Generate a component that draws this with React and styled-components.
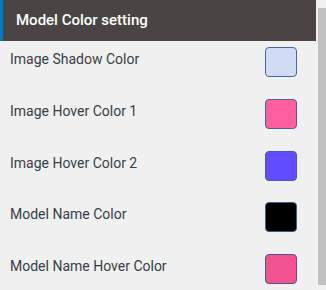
import React from "react";
import styled, { createGlobalStyle } from "styled-components";

const Global = createGlobalStyle`
  html, body { margin: 0; padding: 0; background: #f0f0f1; }
  body { font-family: Roboto, "Noto Sans", "Liberation Sans", sans-serif; }
`;

const Frame = styled.div`
  width: 326px;
  height: 290px;
  display: flex;
  overflow: hidden;
  background: #f0f0f1;
`;

const Panel = styled.div`
  width: 316px;
  display: flex;
  flex-direction: column;
`;

const Header = styled.div`
  flex-shrink: 0;
  height: 41px;
  box-sizing: border-box;
  background: #4a4544;
  border-left: 3px solid #0a78b8;
  color: #ffffff;
  font-size: 15px;
  font-weight: 500;
  display: flex;
  align-items: center;
  padding-left: 13px;
  padding-bottom: 2px;
`;

const List = styled.div`
  flex-shrink: 0;
  display: flex;
  flex-direction: column;
`;

const Row = styled.div`
  display: flex;
  justify-content: space-between;
  align-items: flex-start;
  padding: 6px 19px 15.75px 10px;
`;

const Label = styled.span`
  margin-top: 2px;
  font-size: 14px;
  line-height: 20px;
  color: #383e45;
`;

const Swatch = styled.div`
  width: 32px;
  height: 30px;
  box-sizing: border-box;
  border-radius: 4px;
  border: 1px solid ${(p) => p.$border};
  background: ${(p) => p.$color};
`;

const Track = styled.div`
  width: 10px;
  background: #f1f1f1;
  display: flex;
  justify-content: flex-end;
  padding-top: 8px;
  box-sizing: border-box;
`;

const Thumb = styled.div`
  width: 8px;
  height: 277px;
  background: #c1c1c1;
`;

const items = [
  { label: "Image Shadow Color", color: "#d1dbf4", border: "#3f6a9c" },
  { label: "Image Hover Color 1", color: "#ff5f9e", border: "#4d5f94" },
  { label: "Image Hover Color 2", color: "#614cff", border: "#4a58b0" },
  { label: "Model Name Color", color: "#000000", border: "#3a5d8a" },
  { label: "Model Name Hover Color", color: "#f15290", border: "#5a4f8e" },
];

export default function App() {
  return (
    <>
      <Global />
      <Frame>
        <Panel>
          <Header>Model Color setting</Header>
          <List>
            {items.map((it) => (
              <Row key={it.label}>
                <Label>{it.label}</Label>
                <Swatch $color={it.color} $border={it.border} />
              </Row>
            ))}
          </List>
        </Panel>
        <Track>
          <Thumb />
        </Track>
      </Frame>
    </>
  );
}
